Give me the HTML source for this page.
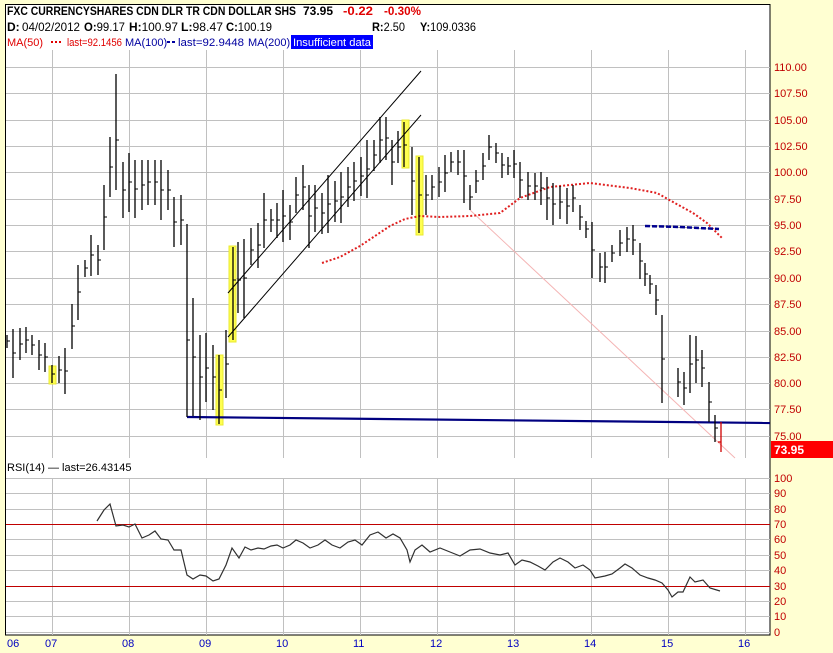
<!DOCTYPE html>
<html><head><meta charset="utf-8"><style>
html,body{margin:0;padding:0;background:#ffffd2;width:833px;height:653px;overflow:hidden}
svg{display:block;font-family:"Liberation Sans","DejaVu Sans",sans-serif;font-size:11px}
</style></head><body>
<svg width="833" height="653" xmlns="http://www.w3.org/2000/svg">
<rect x="0" y="0" width="833" height="653" fill="#ffffd2"/>
<rect x="5.5" y="4.5" width="764.5" height="630.5" fill="#fff" stroke="#000" stroke-width="1"/>
<g stroke="#c0c0c0" stroke-width="1">
<path d="M52.5 50V458M129.5 50V458M206.5 50V458M283.5 50V458M360.5 50V458M437.5 50V458M514.5 50V458M591.5 50V458M668.5 50V458M745.5 50V458"/>
<path d="M52.5 478V635M129.5 478V635M206.5 478V635M283.5 478V635M360.5 478V635M437.5 478V635M514.5 478V635M591.5 478V635M668.5 478V635M745.5 478V635"/>
<path d="M6 67.5H770M6 93.5H770M6 120.5H770M6 146.5H770M6 172.5H770M6 199.5H770M6 225.5H770M6 251.5H770M6 278.5H770M6 304.5H770M6 331.5H770M6 357.5H770M6 383.5H770M6 409.5H770M6 436.5H770"/>
<path d="M6 478.5H770M6 493.5H770M6 509.5H770M6 539.5H770M6 555.5H770M6 570.5H770M6 601.5H770M6 616.5H770M6 632.5H770"/>
</g>
<path d="M6 524.5H770M6 586.5H770" stroke="#c00000" stroke-width="1"/>
<g fill="#ffff50" stroke="#e8e830">
<rect x="49" y="366" width="7" height="18"/><rect x="216" y="355" width="7" height="70"/><rect x="229" y="246" width="7" height="96"/><rect x="402" y="120" width="7" height="48"/><rect x="416" y="156" width="7" height="79"/>
</g>
<path d="M470 210L735 458" stroke="#f4b4b4" stroke-width="1"/>
<path d="M228 293L421 71M228 337L421 115" stroke="#000" stroke-width="1"/>
<path d="M187 417L770 423" stroke="#000080" stroke-width="2.2"/>
<path d="M322 263L340 257L360 246L375 236L390 226L405 219L420 216L440 217L470 216L500 213L520 198L550 187L590 183L630 188L657 193L673 202L693 213L707 223L722 238" fill="none" stroke="#e02020" stroke-width="2" stroke-dasharray="2 2"/>
<path d="M645 226L680 227L719 229" stroke="#000090" stroke-width="2.5" stroke-dasharray="5 2"/>
<path stroke="#000" stroke-width="1.3" fill="none" d="M7 335V348M13 329V378M20 328V360M26 327V353M32 335V355M39 340V370M45 343V372M52 365V383M59 356V383M65 348V394M72 304V349M78 265V320M85 260V277M91 235V276M98 245V275M104 185V250M110 137V197M116 74V190M123 162V218M129 153V212M135 160V218M142 160V210M148 160V205M155 160V205M161 160V220M168 170V210M174 197V247M181 195V245M187 224V417M193 298V416M200 335V420M206 333V402M213 345V410M219 355V424M226 330V398M233 247V340M238 242V313M244 239V318M251 228V265M258 223V268M264 193V248M271 209V232M277 203V238M283 190V242M290 205V240M296 177V213M303 165V210M309 185V248M315 185V232M322 193V234M328 175V233M335 181V222M341 172V223M348 167V207M354 162V201M361 157V196M367 140V198M374 140V171M380 117V163M386 117V160M392 140V185M398 131V163M404 122V167M412 147V215M419 157V233M426 175V215M432 175V200M439 167V197M445 155V192M451 152V172M458 150V175M464 150V203M470 185V210M476 170V193M483 153V180M489 135V160M496 143V163M502 153V178M508 157V175M514 150V178M520 162V198M528 172V200M535 173V200M541 172V205M547 177V220M553 183V225M560 186V219M567 188V224M573 185V212M580 205V230M586 221V238M592 222V278M600 253V282M605 252V283M612 245V262M620 230V256M627 227V252M633 225V255M640 243V279M645 263V286M650 275V294M656 285V315M662 315V403M678 368V397M684 372V405M690 335V393M696 336V383M702 350V387M709 382V422M715 415V442"/>
<path stroke="#000" stroke-width="1" fill="none" d="M7 341h3M13 353h3M20 344h3M26 340h3M32 345h3M39 355h3M45 357h3M52 374h3M59 370h3M65 371h3M72 326h3M78 292h3M85 268h3M91 255h3M98 260h3M104 217h3M110 167h3M116 140h3M123 190h3M129 182h3M135 189h3M142 185h3M148 182h3M155 182h3M161 190h3M168 190h3M174 222h3M181 220h3M187 340h3M193 357h3M200 377h3M206 368h3M213 377h3M219 390h3M226 364h3M233 280h3M238 280h3M244 278h3M251 250h3M258 245h3M264 220h3M271 220h3M277 220h3M283 216h3M290 222h3M296 195h3M303 187h3M309 216h3M315 208h3M322 213h3M328 204h3M335 201h3M341 197h3M348 187h3M354 181h3M361 176h3M367 169h3M374 155h3M380 140h3M386 138h3M392 162h3M398 147h3M404 145h3M412 181h3M419 195h3M426 195h3M432 187h3M439 182h3M445 173h3M451 162h3M458 162h3M464 176h3M470 197h3M476 181h3M483 166h3M489 147h3M496 153h3M502 165h3M508 166h3M514 164h3M520 180h3M528 186h3M535 186h3M541 188h3M547 198h3M553 204h3M560 202h3M567 206h3M573 198h3M580 217h3M586 229h3M592 250h3M600 267h3M605 267h3M612 253h3M620 243h3M627 239h3M633 240h3M640 261h3M645 274h3M650 284h3M656 300h3M662 359h3M678 382h3M684 388h3M690 364h3M696 360h3M702 368h3M709 402h3M715 428h3"/>
<path d="M721 422V452M718 442h3" stroke="#d00000" stroke-width="1.3"/>
<polyline fill="none" stroke="#303030" stroke-width="1.2" points="97,521 104,510 110,504 116,526 123,525 129,527 135,524 142,538 149,535 155,531 161,539 168,540 174,550 181,550 187,575 193,579 200,575 206,576 213,581 219,579 226,565 232,548 239,558 245,547 251,550 258,548 264,549 271,546 277,545 283,548 290,545 296,540 303,543 310,548 318,545 325,540 332,545 340,548 348,542 355,540 362,545 370,535 378,532 386,538 393,534 400,538 407,550 410,562 415,550 422,545 430,552 440,548 450,552 460,556 470,550 480,549 490,553 500,555 508,553 515,565 522,560 530,562 538,566 545,570 553,562 560,558 568,562 575,568 583,565 590,570 595,578 605,576 612,574 620,568 625,564 632,568 640,575 648,578 655,580 662,583 668,590 672,597 678,592 683,592 690,577 695,582 703,580 710,588 720,591"/>
<rect x="771" y="441" width="62" height="17" fill="#ff0000"/>
<text x="774" y="454" fill="#fff" font-weight="bold" font-size="12">73.95</text>
<g fill="#c00000">
<text x="774" y="71">110.00</text><text x="774" y="97">107.50</text><text x="774" y="124">105.00</text><text x="774" y="150">102.50</text><text x="774" y="176">100.00</text><text x="774" y="203">97.50</text><text x="774" y="229">95.00</text><text x="774" y="255">92.50</text><text x="774" y="282">90.00</text><text x="774" y="308">87.50</text><text x="774" y="335">85.00</text><text x="774" y="361">82.50</text><text x="774" y="387">80.00</text><text x="774" y="413">77.50</text><text x="774" y="440">75.00</text>
<text x="774" y="482">100</text><text x="774" y="497">90</text><text x="774" y="513">80</text><text x="774" y="528">70</text><text x="774" y="543">60</text><text x="774" y="559">50</text><text x="774" y="574">40</text><text x="774" y="590">30</text><text x="774" y="605">20</text><text x="774" y="620">10</text><text x="774" y="636">0</text>
</g>
<g fill="#0000c0">
<text x="7" y="647">06</text><text x="45" y="647">07</text><text x="122" y="647">08</text><text x="199" y="647">09</text><text x="276" y="647">10</text><text x="353" y="647">11</text><text x="430" y="647">12</text><text x="507" y="647">13</text><text x="584" y="647">14</text><text x="661" y="647">15</text><text x="738" y="647">16</text>
</g>
<g font-size="12" font-weight="bold">
<text x="7" y="15" textLength="289" lengthAdjust="spacingAndGlyphs">FXC CURRENCYSHARES CDN DLR TR CDN DOLLAR SHS</text>
<text x="303" y="15" textLength="30" lengthAdjust="spacingAndGlyphs">73.95</text>
<text x="343" y="15" fill="#e00000" textLength="30" lengthAdjust="spacingAndGlyphs">-0.22</text>
<text x="384" y="15" fill="#e00000" textLength="37" lengthAdjust="spacingAndGlyphs">-0.30%</text>
</g>
<g font-size="12">
<text x="7" y="31" font-weight="bold">D:</text><text x="22" y="31" textLength="58" lengthAdjust="spacingAndGlyphs">04/02/2012</text>
<text x="84" y="31" textLength="41" lengthAdjust="spacingAndGlyphs"><tspan font-weight="bold">O:</tspan>99.17</text>
<text x="129" y="31" textLength="49" lengthAdjust="spacingAndGlyphs"><tspan font-weight="bold">H:</tspan>100.97</text>
<text x="181" y="31" textLength="42" lengthAdjust="spacingAndGlyphs"><tspan font-weight="bold">L:</tspan>98.47</text>
<text x="226" y="31" textLength="46" lengthAdjust="spacingAndGlyphs"><tspan font-weight="bold">C:</tspan>100.19</text>
<text x="372" y="31" textLength="33" lengthAdjust="spacingAndGlyphs"><tspan font-weight="bold">R:</tspan>2.50</text>
<text x="420" y="31" textLength="56" lengthAdjust="spacingAndGlyphs"><tspan font-weight="bold">Y:</tspan>109.0336</text>
</g>
<rect x="291" y="35" width="82" height="14" fill="#0000ff"/>
<g font-size="11">
<text x="7" y="46" fill="#e00000">MA(50)</text>
<path d="M51 42h2M55 42h2M59 42h2" stroke="#e00000" stroke-width="2"/>
<text x="67" y="46" fill="#e00000" textLength="55" lengthAdjust="spacingAndGlyphs">last=92.1456</text>
<text x="125" y="46" fill="#0000a0">MA(100)</text>
<path d="M167 42h3M172 42h3" stroke="#0000a0" stroke-width="2"/>
<text x="178" y="46" fill="#0000a0" textLength="66" lengthAdjust="spacingAndGlyphs">last=92.9448</text>
<text x="248" y="46" fill="#0000a0">MA(200)</text>
<text x="293" y="46" fill="#fff" textLength="78" lengthAdjust="spacingAndGlyphs">Insufficient data</text>
</g>
<text x="7" y="471">RSI(14) — last=26.43145</text>
</svg>
</body></html>
